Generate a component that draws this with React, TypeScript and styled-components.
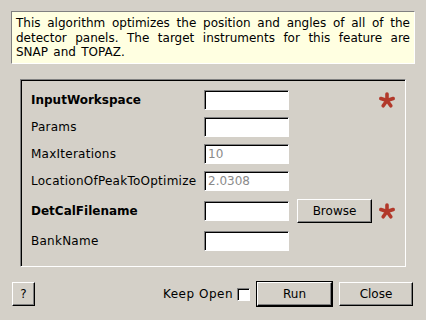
import React from "react";
import styled, { createGlobalStyle } from "styled-components";

const GlobalStyle = createGlobalStyle`
  html, body {
    margin: 0;
    padding: 0;
    background: #d4d0c8;
  }
  body {
    font-family: "DejaVu Sans", "Liberation Sans", sans-serif;
    font-size: 12px;
    color: #000;
  }
`;

const Dialog = styled.div`
  width: 426px;
  height: 320px;
  box-sizing: border-box;
  padding: 11px 11px 0 11px;
  display: flex;
  flex-direction: column;
`;

const Description = styled.div`
  box-sizing: border-box;
  width: 404px;
  height: 53px;
  padding: 4px 4px;
  background: #ffffe1;
  border: 1px solid;
  border-color: #808080 #ffffff #ffffff #808080;
  line-height: 14.5px;
  text-align: justify;
  word-spacing: 1.5px;
`;

const GroupBox = styled.div`
  box-sizing: border-box;
  margin: 15px 9px 0 9px;
  height: 188px;
  border: 1px solid;
  border-color: #808080 #ffffff #ffffff #808080;
  box-shadow: inset 1px 1px 0 #000;
  padding: 10px 0 0 10px;
  display: grid;
  grid-template-columns: 173px 85px 8px 75px 6px 18px;
  grid-auto-rows: min-content;
  row-gap: 7px;
  align-items: center;
`;

const Label = styled.div<{ $required?: boolean }>`
  grid-column: 1;
  font-weight: ${(p) => (p.$required ? "bold" : "normal")};
  letter-spacing: ${(p) => (p.$required ? "0" : "0.25px")};
  white-space: nowrap;
`;

const Field = styled.div<{ $muted?: boolean }>`
  grid-column: 2;
  box-sizing: border-box;
  height: 20px;
  background: #fff;
  border: 1px solid;
  border-color: #808080 #ffffff #ffffff #808080;
  box-shadow: inset 1px 1px 0 #000;
  padding: 0 3px;
  line-height: 18px;
  color: ${(p) => (p.$muted ? "#8a8a8a" : "#000")};
`;

const Button = styled.div<{ $w: number; $default?: boolean }>`
  box-sizing: border-box;
  width: ${(p) => p.$w}px;
  height: 24px;
  display: flex;
  align-items: center;
  justify-content: center;
  background: #d4d0c8;
  border: 1px solid;
  border-color: #ffffff #000000 #000000 #ffffff;
  box-shadow: inset -1px -1px 0 #808080;
  outline: ${(p) => (p.$default ? "1px solid #000" : "none")};
  outline-offset: 0;
`;

const BrowseCell = styled.div`
  grid-column: 4;
  padding: 1px 0;
`;

const StarCell = styled.div`
  grid-column: 6;
  display: flex;
  align-items: center;
  justify-content: center;
  height: 18px;
`;

const BottomBar = styled.div`
  margin-top: 15px;
  display: flex;
  align-items: center;
  padding: 0 2px 0 1px;
`;

const Spacer = styled.div`
  flex: 1;
`;

const KeepOpen = styled.span`
  margin-right: 4px;
  letter-spacing: 0.5px;
`;

const CheckBox = styled.div`
  box-sizing: border-box;
  width: 13px;
  height: 13px;
  background: #fff;
  border: 1px solid;
  border-color: #808080 #ffffff #ffffff #808080;
  box-shadow: inset 1px 1px 0 #000;
  margin-right: 7px;
`;

const RunWrap = styled.div`
  margin-right: 7px;
`;

const Asterisk = () => (
  <svg width="18" height="18" viewBox="0 0 18 18">
    {[90, 162, 234, 306, 18].map((a) => {
      const r = (a * Math.PI) / 180;
      return (
        <line
          key={a}
          x1="9"
          y1="9.5"
          x2={9 + Math.cos(r) * 6.5}
          y2={9.5 - Math.sin(r) * 6.5}
          stroke="#b2392b"
          strokeWidth="3.6"
          strokeLinecap="round"
        />
      );
    })}
  </svg>
);

const rows = [
  { name: "InputWorkspace", required: true, value: "", star: true },
  { name: "Params", value: "" },
  { name: "MaxIterations", value: "10", muted: true },
  { name: "LocationOfPeakToOptimize", value: "2.0308", muted: true },
  { name: "DetCalFilename", required: true, value: "", browse: true, star: true },
  { name: "BankName", value: "" },
];

export default function App() {
  return (
    <>
      <GlobalStyle />
      <Dialog>
        <Description>
          This algorithm optimizes the position and angles of all of the
          detector panels. The target instruments for this feature are SNAP
          and TOPAZ.
        </Description>
        <GroupBox>
          {rows.map((r) => (
            <React.Fragment key={r.name}>
              <Label $required={r.required}>{r.name}</Label>
              <Field $muted={r.muted}>{r.value}</Field>
              {r.browse && (
                <BrowseCell>
                  <Button $w={75}>Browse</Button>
                </BrowseCell>
              )}
              {r.star && (
                <StarCell>
                  <Asterisk />
                </StarCell>
              )}
            </React.Fragment>
          ))}
        </GroupBox>
        <BottomBar>
          <Button $w={23}>?</Button>
          <Spacer />
          <KeepOpen>Keep Open</KeepOpen>
          <CheckBox />
          <RunWrap>
            <Button $w={75} $default>
              Run
            </Button>
          </RunWrap>
          <Button $w={74}>Close</Button>
        </BottomBar>
      </Dialog>
    </>
  );
}
